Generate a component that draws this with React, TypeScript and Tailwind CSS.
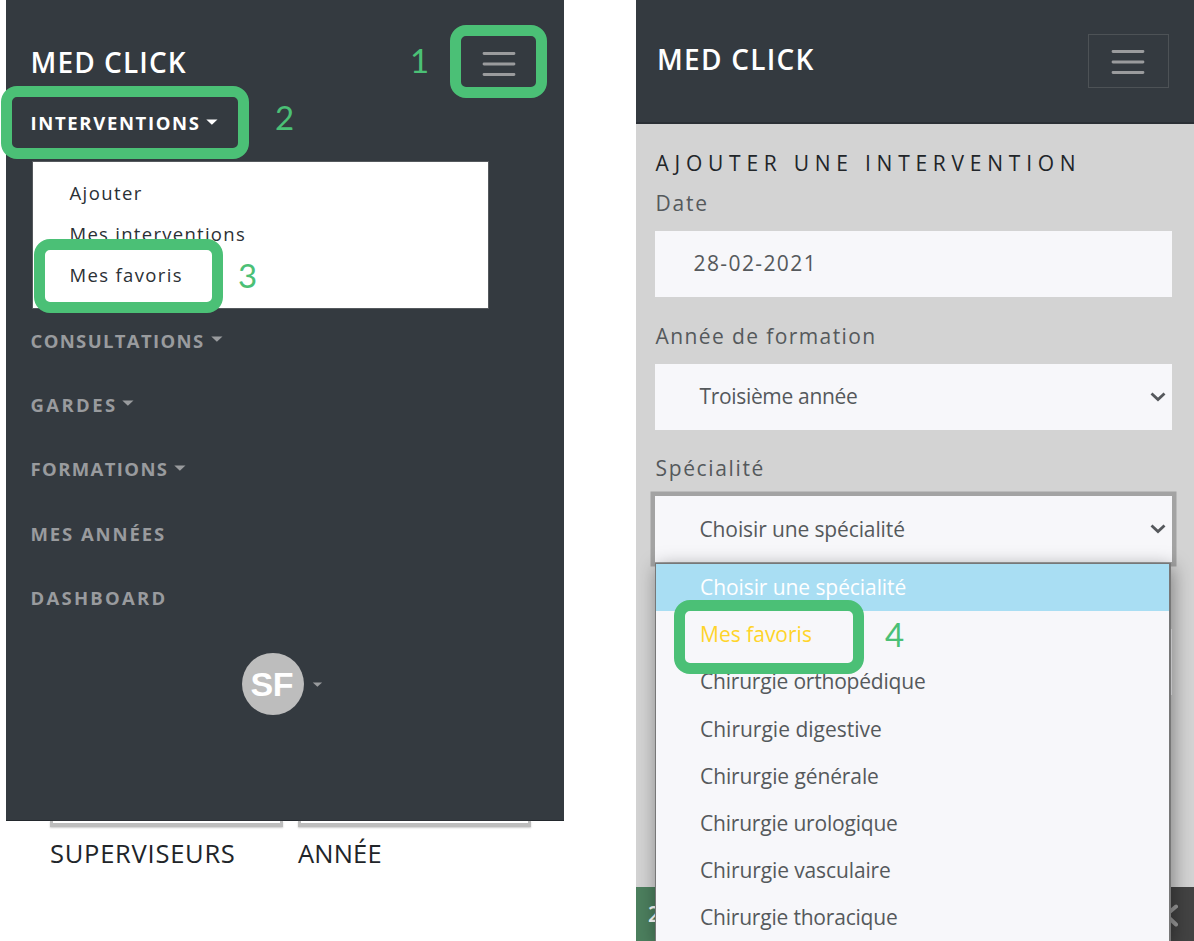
import React from "react";

type Item = { label: string; tracking: string };

const navItems: (Item & { caret: boolean; gap: string })[] = [
  { label: "CONSULTATIONS", tracking: "tracking-[1.35px]", caret: true, gap: "ml-[6px]" },
  { label: "GARDES", tracking: "tracking-[2.4px]", caret: true, gap: "ml-[4.5px]" },
  { label: "FORMATIONS", tracking: "tracking-[1.38px]", caret: true, gap: "ml-[6px]" },
  { label: "MES ANNÉES", tracking: "tracking-[1.9px]", caret: false, gap: "" },
  { label: "DASHBOARD", tracking: "tracking-[2.25px]", caret: false, gap: "" },
];

const subItems: Item[] = [
  { label: "Ajouter", tracking: "tracking-[1.4px]" },
  { label: "Mes interventions", tracking: "tracking-[1.28px]" },
  { label: "Mes favoris", tracking: "tracking-[1.35px]" },
];

const options: (Item & { color: string })[] = [
  { label: "Choisir une spécialité", tracking: "tracking-[-0.08px]", color: "bg-[#a9def3] text-white" },
  { label: "Mes favoris", tracking: "tracking-[0px]", color: "text-[#ffd42a]" },
  { label: "Chirurgie orthopédique", tracking: "tracking-[-0.2px]", color: "text-[#55595c]" },
  { label: "Chirurgie digestive", tracking: "tracking-[0px]", color: "text-[#55595c]" },
  { label: "Chirurgie générale", tracking: "tracking-[-0.1px]", color: "text-[#55595c]" },
  { label: "Chirurgie urologique", tracking: "tracking-[-0.2px]", color: "text-[#55595c]" },
  { label: "Chirurgie vasculaire", tracking: "tracking-[-0.12px]", color: "text-[#55595c]" },
  { label: "Chirurgie thoracique", tracking: "tracking-[-0.2px]", color: "text-[#55595c]" },
];

function Caret({ className }: { className: string }) {
  return (
    <svg width="12" height="6" viewBox="0 0 12 6" className={className} fill="currentColor">
      <path d="M0.3 0.5h11.2L5.9 5.7z" />
    </svg>
  );
}

function Burger() {
  return (
    <svg width="34" height="28" viewBox="0 0 34 28" stroke="#9a9b9d" strokeWidth="2.8" strokeLinecap="round">
      <path d="M2 3.5h30M2 14h30M2 24.5h30" />
    </svg>
  );
}

function Chevron() {
  return (
    <svg width="16" height="10" viewBox="0 0 16 10" fill="none" stroke="#55585c" strokeWidth="2.8">
      <path d="M1.5 1.5L8 7.6L14.5 1.5" />
    </svg>
  );
}

function Callout({ className }: { className: string }) {
  return <div className={`absolute border-[11.5px] border-[#4bc076] ${className}`} />;
}

function Step({ n, className }: { n: string; className: string }) {
  return (
    <span className={`absolute font-[Lato,sans-serif] text-[33px] leading-[40px] text-[#4bc076] ${className}`}>{n}</span>
  );
}

function MenuPanel() {
  return (
    <section className="ml-[6px] flex w-[558px] flex-col">
      <nav className="flex h-[820.5px] flex-col border-b border-[#23282d] bg-[#343a40] pl-[24.5px]">
        <div className="flex h-[100px] items-start justify-between pr-[48.5px]">
          <span className="mt-[42px] text-[28px] leading-[40px] font-semibold tracking-[1.1px] text-white">MED CLICK</span>
          <span className="mt-[50px]">
            <Burger />
          </span>
        </div>
        <div className="flex h-[61px] items-start text-white">
          <span className="mt-[11px] text-[18.5px] leading-[24px] font-bold tracking-[1.65px]">INTERVENTIONS</span>
          <Caret className="mt-[19px] ml-[5px]" />
        </div>
        <div className="ml-[1px] flex h-[147.5px] w-[457px] flex-col border border-[#55595d] bg-white pt-[11px] pl-[37px] text-[18.5px] text-[#2b3035]">
          {subItems.map((s) => (
            <div key={s.label} className={`flex h-[40.7px] shrink-0 items-center ${s.tracking}`}>
              {s.label}
            </div>
          ))}
        </div>
        <ul className="text-[18.5px] font-bold text-[#999b9e]">
          {navItems.map((n) => (
            <li key={n.label} className="flex h-[64.3px] items-center">
              <span className={n.tracking}>{n.label}</span>
              {n.caret && <Caret className={`mb-[3px] ${n.gap}`} />}
            </li>
          ))}
        </ul>
        <div className="mt-[23px] flex items-center pl-[211px]">
          <span className="flex size-[62.5px] items-center justify-center rounded-full bg-[#bdbdbd] pr-[2px] font-['Liberation_Sans',Arial,sans-serif] text-[34px] leading-none font-bold tracking-[-0.5px] text-white">
            SF
          </span>
          <Caret className="ml-[8px] h-[5px] w-[11px] text-[#999b9e]" />
        </div>
      </nav>
      <div className="grid grid-cols-[233px_233px] gap-[15px] pl-[44px] text-[25.5px] text-[#212529]">
        <div>
          <div className="h-[6px] border-x-[3px] border-b-4 border-[#bdbdbd] shadow-[0_1px_2px_#ccc]" />
          <div className="mt-[9px] leading-[34px] tracking-[0.75px]">SUPERVISEURS</div>
        </div>
        <div>
          <div className="h-[6px] border-x-[3px] border-b-4 border-[#bdbdbd] shadow-[0_1px_2px_#ccc]" />
          <div className="mt-[9px] leading-[34px] tracking-[0.2px]">ANNÉE</div>
        </div>
      </div>
    </section>
  );
}

function FormPanel() {
  return (
    <section className="relative flex h-[941px] w-[558px] flex-col overflow-hidden bg-[#d3d3d3] text-[21px] text-[#55595c]">
      <header className="flex h-[124px] shrink-0 items-start justify-between border-b-2 border-[#2a2f35] bg-[#343a40] pr-[25px] pl-[21px]">
        <span className="mt-[39px] text-[28px] leading-[40px] font-semibold tracking-[1.25px] text-white">MED CLICK</span>
        <span className="mt-[34px] flex h-[54px] w-[81px] items-center justify-center border border-[#4d5256] pt-[2px] pr-[1px]">
          <Burger />
        </span>
      </header>
      <div className="flex flex-col pr-[22px] pl-[18.5px]">
        <h1 className="mt-[24px] h-[30px] pl-[1px] leading-[30px] tracking-[5.75px] whitespace-nowrap text-[#212529]">AJOUTER UNE INTERVENTION</h1>
        <label className="mt-[10px] h-[30px] pl-[1px] leading-[30px] tracking-[1.8px]">Date</label>
        <div className="mt-[13px] flex h-[66px] items-center bg-[#f7f7fa] pl-[39px] tracking-[1.4px]">28-02-2021</div>
        <label className="mt-[24px] h-[30px] pl-[1px] leading-[30px] tracking-[1.4px]">Année de formation</label>
        <div className="mt-[13px] flex h-[66px] items-center justify-between bg-[#f7f7fa] pr-[6px] pl-[45px]">
          <span className="tracking-[-0.33px]">Troisième année</span>
          <Chevron />
        </div>
        <label className="mt-[23px] h-[30px] pl-[1px] leading-[30px] tracking-[1.65px]">Spécialité</label>
        <div className="mt-[13px] flex h-[66px] items-center justify-between bg-[#f7f7fa] pr-[6px] pl-[45px] shadow-[0_0_0_4.5px_#a3a3a3]">
          <span className="pt-[1px] tracking-[-0.12px]">Choisir une spécialité</span>
          <Chevron />
        </div>
        <div className="mt-[67px] h-[66px] bg-[#f7f7fa]" />
      </div>
      <footer className="mt-auto flex h-[54px] shrink-0 justify-between bg-[#434343]">
        <div className="h-full w-[60px] bg-[#4c7f5e] pt-[12px] pl-[12px] text-[21px] leading-[30px] font-semibold text-white">2</div>
        <svg width="24" height="24" viewBox="0 0 24 24" className="mt-[16px] mr-[16px]" fill="none" stroke="#9b9b9b" strokeWidth="4" strokeLinecap="round">
          <path d="M22 3.5L12 12L22 21.5" />
        </svg>
      </footer>
      <div className="absolute top-[563px] left-[19px] w-[516px] border border-r-2 border-[#777] bg-[#f7f7fa] shadow-[2px_4px_18px_rgba(0,0,0,0.4)]">
        {options.map((o) => (
          <div key={o.label} className={`flex h-[47.1px] items-center pt-[1px] pl-[44px] ${o.tracking} ${o.color}`}>
            {o.label}
          </div>
        ))}
      </div>
    </section>
  );
}

export default function App() {
  return (
    <main className="relative flex h-[941px] w-[1194px] justify-between overflow-hidden bg-white font-['Open_Sans',sans-serif] whitespace-nowrap">
      <MenuPanel />
      <FormPanel />
      <Callout className="top-[25px] left-[450px] h-[73px] w-[97px] rounded-[16px]" />
      <Callout className="top-[86px] left-[1px] h-[73px] w-[248px] rounded-[16px]" />
      <Callout className="top-[239px] left-[34px] h-[74px] w-[189px] rounded-[16px]" />
      <Callout className="top-[600px] left-[674px] h-[74px] w-[190px] rounded-[16px]" />
      <Step n="1" className="top-[40px] left-[410px]" />
      <Step n="2" className="top-[97px] left-[275px]" />
      <Step n="3" className="top-[255px] left-[238px]" />
      <Step n="4" className="top-[614px] left-[885px]" />
    </main>
  );
}
